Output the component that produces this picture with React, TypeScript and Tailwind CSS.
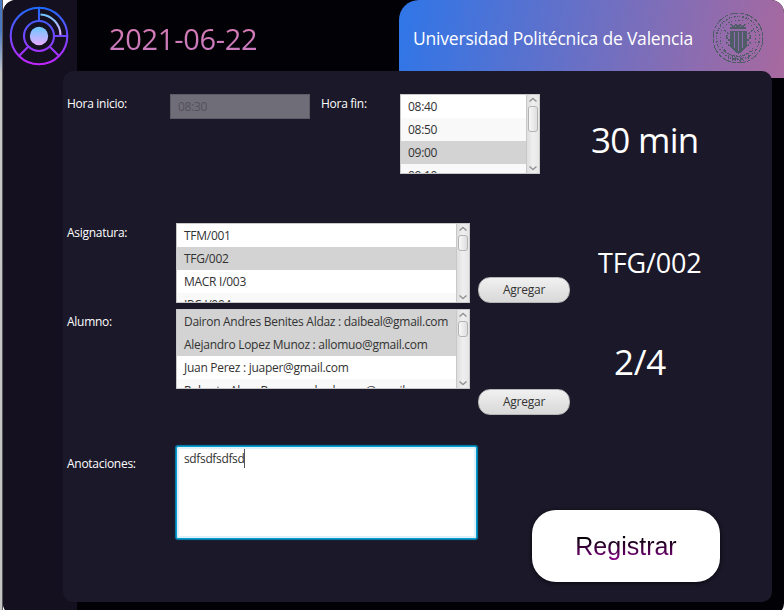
import React from "react";

type Row = { text: string; tone: string };

function Seal() {
  return (
    <svg width="52" height="52" viewBox="0 0 52 52" fill="none" stroke="#505d68" shapeRendering="crispEdges">
      <circle cx="26" cy="26" r="25" strokeWidth="1" strokeDasharray="9 1.5 4 1" />
      <circle cx="26" cy="26" r="21.500" strokeWidth="1.500" strokeDasharray="1 2 2 1.5 1 1" />
      <circle cx="26" cy="26" r="18" strokeWidth="1" strokeDasharray="2 2 1 3 1 1.5" />
      <path d="M13 18l3 4-2 3 3 3-2 3 3 4M40 18l-3 4 2 3-3 3 2 3-3 4" strokeWidth="1.5" strokeDasharray="2 1" />
      <path d="M19 12l2 3 3-2 2 2 2-2 3 2 2-3M18 16h16" strokeWidth="1.5" />
      <path d="M18 19h17v15l-3 4-5.500 4-5.500-4-3-4z" fill="#505d68" stroke="none" />
      <path d="M22 20h1v16h-1zM26 20h1v19h-1zM30 20h1v16h-1z" fill="#8c6bae" stroke="none" />
      <path d="M11 38q15 13 30 0" strokeWidth="1" strokeDasharray="4 1" />
      <path d="M16 43l1 4M20 44v5M23 49v-4l5 4v-4M32 45q-3 2 0 4M36 43v4" strokeWidth="1" />
    </svg>
  );
}

function Logo() {
  return (
    <svg width="60" height="60" viewBox="0 0 60 60" fill="none">
      <defs>
        <linearGradient id="ring" x1="0" y1="0" x2="0" y2="60" gradientUnits="userSpaceOnUse">
          <stop offset="0" stopColor="#1a6dff" />
          <stop offset="1" stopColor="#c822ff" />
        </linearGradient>
        <linearGradient id="arc" x1="0" y1="8" x2="0" y2="30" gradientUnits="userSpaceOnUse">
          <stop offset="0" stopColor="#6dc7ff" />
          <stop offset="1" stopColor="#e6abff" />
        </linearGradient>
        <linearGradient id="core" x1="0" y1="21" x2="0" y2="39" gradientUnits="userSpaceOnUse">
          <stop offset="0" stopColor="#6dc7ff" />
          <stop offset="1" stopColor="#e6abff" />
        </linearGradient>
      </defs>
      <g stroke="url(#ring)" strokeWidth="2.100">
        <circle cx="30" cy="30" r="28.300" />
        <circle cx="30" cy="30" r="15" />
        <path d="M29.990 2L30 15M45 29.990L58 30M19.400 40.600L10.200 49.800M40.600 40.600L49.800 49.800" />
      </g>
      <path d="M31.500 8.500A21 21 0 0 1 51.500 29" stroke="url(#arc)" strokeWidth="2.100" />
      <circle cx="30" cy="30" r="9.200" fill="url(#core)" />
    </svg>
  );
}

function Chevron({ down = false }: { down?: boolean }) {
  return (
    <svg width="8" height="5" viewBox="0 0 8 5" fill="none" stroke="#949494" strokeWidth="1.400">
      <path d={down ? "M.500 .500L4 3.500L7.500 .500" : "M.500 4.500L4 1.500L7.500 4.500"} />
    </svg>
  );
}

function ListBox({ rows, width, thumb }: { rows: Row[]; width: string; thumb: string }) {
  return (
    <div className={`flex h-20 shrink-0 overflow-hidden border border-[#c8c8c8] bg-white ${width}`}>
      <div className="min-w-0 flex-1 overflow-hidden">
        {rows.map((r) => (
          <div key={r.text} className={`flex h-[23px] items-center whitespace-nowrap pl-[7px] text-[#323232] ${r.tone}`}>
            {r.text}
          </div>
        ))}
      </div>
      <div className="flex w-[13px] flex-col items-center border-l border-[#c8c8c8] bg-gradient-to-r from-[#dedede] via-[#efefef] to-[#e6e6e6] pt-[2px] pb-[2px]">
        <Chevron />
        <div className={`mt-1 w-[10px] rounded-[3px] border border-[#b3b3b3] bg-gradient-to-r from-[#f8f8f8] to-[#dedede] ${thumb}`} />
        <div className="flex-1" />
        <Chevron down />
      </div>
    </div>
  );
}

function AddButton() {
  return (
    <button className="h-[26px] w-[92px] shrink-0 rounded-[12px] border border-[#b5b5b5] bg-gradient-to-b from-[#f1f1f1] to-[#d8d8d8] tracking-[-0.230px] text-[#323232]">
      Agregar
    </button>
  );
}

const times: Row[] = [
  { text: "08:40", tone: "bg-white" },
  { text: "08:50", tone: "bg-[#f9f9f9]" },
  { text: "09:00", tone: "bg-[#d3d3d3]" },
  { text: "09:10", tone: "bg-[#f9f9f9]" },
];
const subjects: Row[] = [
  { text: "TFM/001", tone: "bg-white" },
  { text: "TFG/002", tone: "bg-[#d3d3d3]" },
  { text: "MACR I/003", tone: "bg-white" },
  { text: "IPC I/004", tone: "bg-[#f9f9f9]" },
];
const students: Row[] = [
  { text: "Dairon Andres Benites Aldaz : daibeal@gmail.com", tone: "bg-[#d3d3d3]" },
  { text: "Alejandro Lopez Munoz : allomuo@gmail.com", tone: "bg-[#d3d3d3]" },
  { text: "Juan Perez : juaper@gmail.com", tone: "bg-white" },
  { text: "Roberto Alvas Boronos : berbanos@gmail.com", tone: "bg-[#f9f9f9]" },
];

export default function App() {
  return (
    <div className="flex h-[610px] w-[784px] overflow-hidden bg-white font-['Open_Sans',sans-serif] text-[12px] leading-4 tracking-[-0.280px] text-white">
      <div className="w-[2px] bg-gradient-to-b from-[#4a78c0] from-5% via-[#c8c8c8] via-12% to-[#c4c4c4]" />
      <div className="w-px bg-[#55555a]" />
      <div className="grid h-[616px] w-[781px] shrink-0 overflow-hidden rounded-[13px] bg-[#020206]">
        <div className="col-start-1 row-start-1 flex">
          <aside className="w-[74px] bg-[#14101f] pl-[6px] pt-[6px]">
            <Logo />
          </aside>
          <header className="flex h-[78px] flex-1">
            <h1 className="w-[322px] pl-8 pt-[19px] text-[29px] leading-[40px] tracking-[-0.300px] whitespace-nowrap">
              <span className="bg-gradient-to-b from-[#dd7bb4] to-[#c47bc0] bg-clip-text text-transparent">2021-06-22</span>
            </h1>
            <div className="flex flex-1 rounded-tl-[20px] bg-[linear-gradient(100deg,#2f76e8,#a8699f)] pl-[14px]">
              <h2 className="mt-[26px] w-[299px] whitespace-nowrap text-[17.500px] leading-6 tracking-[-0.200px]">
                Universidad Politécnica de Valencia
              </h2>
              <div className="mt-3">
                <Seal />
              </div>
            </div>
          </header>
        </div>

        <main className="z-10 col-start-1 row-start-1 mt-[71px] ml-[60px] h-[531px] w-[709px] rounded-[10px] bg-[#1b1829] pt-[23px] pl-1">
          <section className="flex h-20">
            <label className="mt-[2px] w-[103px]">Hora inicio:</label>
            <div className="h-[25px] w-[140px] border border-[#5d5b68] bg-[#6f6d77] pl-[7px] leading-[23px] text-[#53515f]">08:30</div>
            <label className="mt-[2px] ml-[11px] w-[79px]">Hora fin:</label>
            <ListBox rows={times} width="w-[140px]" thumb="h-[26px]" />
            <div className="ml-[51px] mt-[22px] whitespace-nowrap text-[35px] leading-[48px] tracking-[-0.700px]">30 min</div>
          </section>

          <section className="mt-[49px] flex h-20">
            <label className="mt-[2px] w-[109px]">Asignatura:</label>
            <ListBox rows={subjects} width="w-[294px]" thumb="h-4" />
            <div className="ml-2 mt-[54px]">
              <AddButton />
            </div>
            <div className="ml-[28px] mt-5 text-[27px] leading-10 tracking-[-0.150px]">TFG/002</div>
          </section>

          <section className="mt-[6px] flex h-20">
            <label className="mt-[5px] w-[109px]">Alumno:</label>
            <ListBox rows={students} width="w-[294px]" thumb="h-4" />
            <div className="ml-2 mt-20">
              <AddButton />
            </div>
            <div className="ml-11 mt-[29px] text-[35px] leading-[48px]">2/4</div>
          </section>

          <section className="mt-[57px] flex">
            <label className="mt-[10px] w-[109px]">Anotaciones:</label>
            <div className="flex h-[93px] w-[301px] items-start rounded-[2px] border border-[#039ed3] bg-white p-[2px] pl-[7px] shadow-[0_0_1px_1px_#0582ad,inset_0_0_0_2px_#def1f8]">
              <span className="mt-[2px] tracking-[-0.360px] text-[#323232]">sdfsdfsdfsd</span>
              <span className="h-[19px] w-px bg-[#555]" />
            </div>
            <button className="mt-16 ml-[55px] h-[72px] w-[188px] rounded-[24px] bg-white font-['Liberation_Sans',Arial,sans-serif] text-[25px] tracking-normal shadow-[0_1px_4px_#08070e]">
              <span className="bg-gradient-to-b from-black to-[#8b008b] bg-clip-text text-transparent">Registrar</span>
            </button>
          </section>
        </main>
      </div>
    </div>
  );
}
